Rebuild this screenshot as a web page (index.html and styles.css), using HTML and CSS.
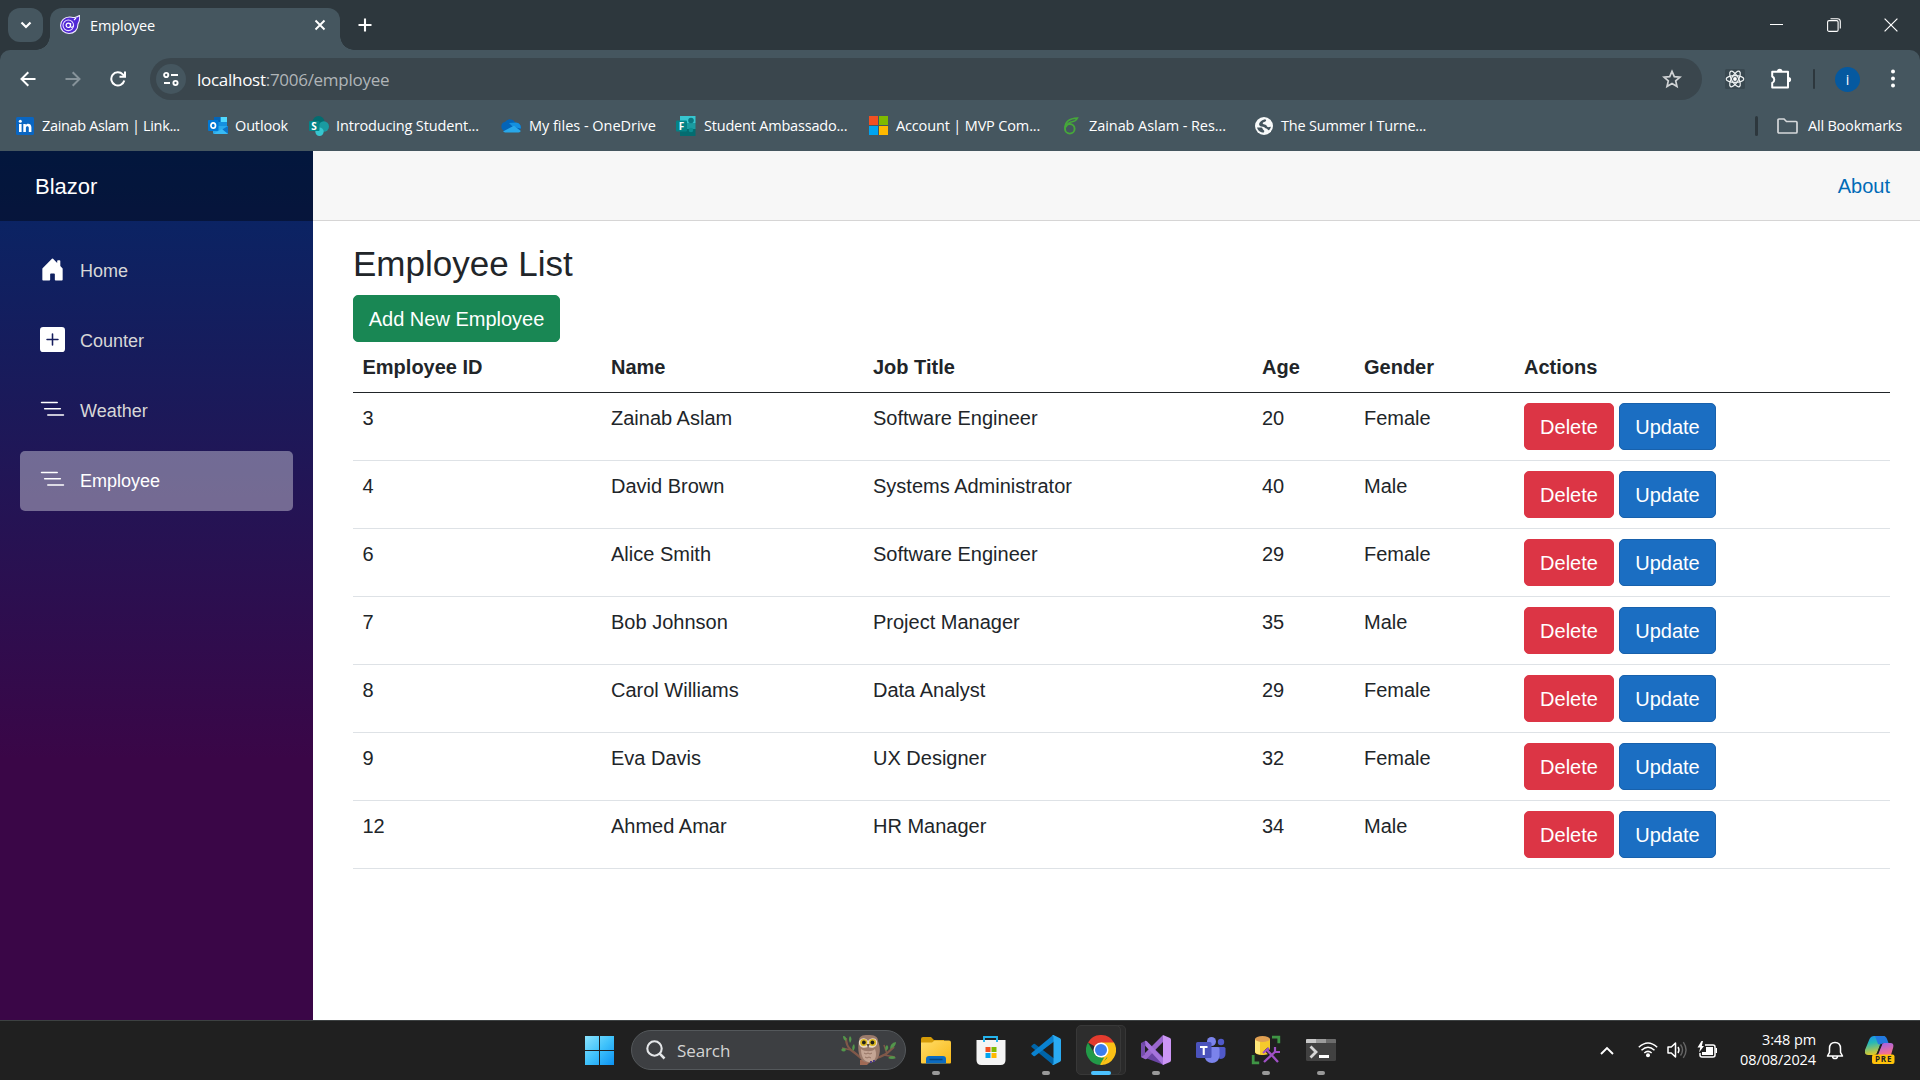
FILE: index.html
```html
<!DOCTYPE html>
<html lang="en">
<head>
<meta charset="utf-8">
<title>Employee</title>
<link rel="stylesheet" href="styles.css">
</head>
<body>
<div class="screen">
  <header class="browser">
    <div class="tabstrip">
      <div class="tab-search"><svg width="12" height="8" viewBox="0 0 12 8"><path d="M1.500 1.500 6 6l4.500-4.500" fill="none" stroke="#fff" stroke-width="2.200"/></svg></div>
      <div class="tab">
        <svg class="favicon" width="20" height="20" viewBox="0 0 20 20"><path d="M19.500.5c.8 4-.2 6-1.500 8.500C18 15 14 18.500 9 18.500 4 18.500.6 15 .6 10.500.6 5.500 4.500 2 9.500 2c2 0 4 1 6 .3C17 2 18 1.500 19.500.5Z" fill="#5027d5" stroke="#f1eaff" stroke-width="1.100"/><circle cx="8.300" cy="10.300" r="5.300" fill="none" stroke="#e7ddff" stroke-width="1.100"/><circle cx="8.300" cy="10.300" r="2.200" fill="none" stroke="#fff" stroke-width="1.200"/><path d="M10.600 8v3.300c0 1.500 2.500 1.500 2.800-.8M14 5l2-2" fill="none" stroke="#fff" stroke-width="1.100"/></svg>
        <span class="tab-title">Employee</span>
        <svg class="tab-close" width="12" height="12" viewBox="0 0 12 12"><path d="m1.500 1.500 9 9m0-9-9 9" stroke="#fff" stroke-width="1.900"/></svg>
      </div>
      <svg class="new-tab" width="14" height="14" viewBox="0 0 14 14"><path d="M7 .5v13M.5 7h13" stroke="#fff" stroke-width="2.100"/></svg>
      <div class="window-controls">
        <svg width="14" height="14" viewBox="0 0 14 14"><path d="M0 6.500h13" stroke="#fff"/></svg>
        <svg width="14" height="14" viewBox="0 0 14 14"><rect x=".6" y="2.600" width="10.500" height="10.800" rx="1.500" fill="none" stroke="#fff" stroke-width="1.100"/><path d="M3.500.7h7a2.800 2.800 0 0 1 2.800 2.800v7" fill="none" stroke="#fff" stroke-width="1.100"/></svg>
        <svg width="14" height="14" viewBox="0 0 14 14"><path d="m.6.6 12.800 12.800m0-12.800L.6 13.400" stroke="#fff" stroke-width="1.200"/></svg>
      </div>
    </div>
    <div class="chrome-body">
      <div class="toolbar">
        <div class="nav-buttons">
          <svg width="16" height="16" viewBox="0 0 16 16"><path d="M15.500 8H2M8.300 1.200 1.500 8l6.800 6.800" fill="none" stroke="#fff" stroke-width="2"/></svg>
          <svg width="16" height="16" viewBox="0 0 16 16"><path d="M.5 8H14M7.700 1.200 14.500 8l-6.800 6.800" fill="none" stroke="#87939a" stroke-width="2"/></svg>
          <svg width="16" height="16" viewBox="0 0 16 16"><path d="M14.300 9.500A6.600 6.600 0 1 1 12.800 3.400L14.500 5.200M15 .5v5.300H9.500" fill="none" stroke="#fff" stroke-width="2"/></svg>
        </div>
        <div class="omnibox">
          <div class="site-info"><svg width="16" height="16" viewBox="0 0 16 16"><g fill="none" stroke="#fff" stroke-width="1.900"><circle cx="3.200" cy="4" r="2.100"/><path d="M8 4h7M1 12h6"/><circle cx="12.500" cy="12" r="2.100"/></g></svg></div>
          <span class="url">localhost<span class="url-rest">:7006/employee</span></span>
          <svg class="star" width="20" height="20" viewBox="0 0 20 20"><path d="m10 2.300 2.300 5.300 5.700.5-4.300 3.800 1.300 5.700-5-3-5 3 1.300-5.700L2 8.100l5.700-.5Z" fill="none" stroke="#d0d3d5" stroke-width="1.700"/></svg>
        </div>
        <svg class="react" width="20" height="20" viewBox="0 0 20 20"><rect width="20" height="20" rx="1.500" fill="#394850"/><g fill="none" stroke="#eef2f3" stroke-width="1.200"><ellipse cx="10" cy="10" rx="8.800" ry="3.400"/><ellipse cx="10" cy="10" rx="8.800" ry="3.400" transform="rotate(60 10 10)"/><ellipse cx="10" cy="10" rx="8.800" ry="3.400" transform="rotate(120 10 10)"/></g><circle cx="10" cy="10" r="1.900" fill="#fff"/></svg>
        <svg class="puzzle" width="22" height="22" viewBox="0 0 22 22"><path d="M2.200 3.700H18v15.800H2.200v-4.600a3.500 3.500 0 0 0 0-6.400Z" fill="none" stroke="#fff" stroke-width="2" stroke-linejoin="round"/><path d="M7 3.500a2.700 2.700 0 0 1 5.400 0ZM18.500 9a2.600 2.600 0 0 1 0 5.200Z" fill="#fff"/></svg>
        <span class="divider thin"></span>
        <span class="avatar">i</span>
        <svg class="menu" width="6" height="20" viewBox="0 0 6 20"><g fill="#fff"><circle cx="3" cy="2.500" r="2"/><circle cx="3" cy="9.500" r="2"/><circle cx="3" cy="16.500" r="2"/></g></svg>
      </div>
      <div class="bookmarks">
        <div class="bookmark b1"><svg width="18" height="18" viewBox="0 0 18 18"><rect width="18" height="18" rx="1.500" fill="#0a66c2"/><path d="M3 7h2.600v8H3zM7.300 7h2.500v1.200c1.300-2.300 5.600-1.700 5.600 2.100V15h-2.600v-4.200c0-2.200-2.900-2-2.900 0V15H7.300z" fill="#fff"/><circle cx="4.300" cy="4.200" r="1.500" fill="#fff"/></svg><span>Zainab Aslam | Link...</span></div>
        <div class="bookmark b2"><svg width="20" height="20" viewBox="0 0 20 20"><path d="M6 1h13v11H6z" fill="#1490df"/><path d="M12.500 1H19v5h-6.500z" fill="#50d9ff"/><path d="M6 1h6.500v5H6z" fill="#0364b8"/><path d="M5 10h15v7.500H5z" fill="#28a8ea"/><path d="m20 10-7.500 4.500 7.500 3Z" fill="#0a74ca"/><path d="m5 18 9-5 6 5Z" fill="#38baf5"/><rect y="4" width="10.500" height="11" rx="1" fill="#0078d4"/><ellipse cx="5.200" cy="9.500" rx="2.300" ry="2.700" fill="none" stroke="#fff" stroke-width="1.700"/></svg><span>Outlook</span></div>
        <div class="bookmark b3"><svg width="20" height="20" viewBox="0 0 20 20"><circle cx="9.500" cy="6" r="6" fill="#036c70"/><circle cx="14.800" cy="10.500" r="5.200" fill="#1a9ba1"/><circle cx="10.500" cy="15.800" r="4.200" fill="#37c6d0"/><rect y="5" width="10.500" height="10" rx="1" fill="#038387"/><text x="2.300" y="13.500" class="glyph">S</text></svg><span>Introducing Student...</span></div>
        <div class="bookmark b4"><svg width="20" height="20" viewBox="0 0 20 20"><path d="M4 15a4.600 4.600 0 0 1 0-9 6 6 0 0 1 10.500 1A4.600 4.600 0 0 1 19.700 13L16 16H4Z" fill="#0364b8"/><path d="m8 7 7-.5c3 .2 5 2.500 4.800 6L12 11Z" fill="#1490df"/><path d="M2 15.500 13 9.700l5.500 4.200c2.500 1 .5 3-1.500 2.600H4Z" fill="#28a8ea"/></svg><span>My files - OneDrive</span></div>
        <div class="bookmark b5"><svg width="20" height="20" viewBox="0 0 20 20"><path d="M4 0h15.500v7H4z" fill="#37c6d0"/><path d="M4 7h15.500v6H4z" fill="#1a9ba1"/><path d="M4 13h15.500v7H4z" fill="#036c70"/><circle cx="15" cy="4.500" r="2.800" fill="#0b7780"/><circle cx="15" cy="14" r="2.300" fill="#0c8d92"/><rect y="4.500" width="11" height="11" rx="1" fill="#038387"/><text x="2.700" y="13.800" class="glyph">F</text></svg><span>Student Ambassado...</span></div>
        <div class="bookmark b6"><svg width="20" height="20" viewBox="0 0 20 20"><path d="M0 0h9v9H0z" fill="#f25022"/><path d="M10 0h9v9h-9z" fill="#7fba00"/><path d="M0 10h9v9H0z" fill="#00a4ef"/><path d="M10 10h9v9h-9z" fill="#ffb900"/></svg><span>Account | MVP Com...</span></div>
        <div class="bookmark b7"><svg width="18" height="20" viewBox="0 0 18 20"><ellipse cx="6.800" cy="12.800" rx="4.800" ry="4.800" fill="none" stroke="#46a83a" stroke-width="1.900"/><path d="M2 12C2 6 5 2.500 14.500 2c-1 2-2 3.200-4.500 3.500C6 6 4 8 3 11" fill="none" stroke="#46a83a" stroke-width="1.600"/></svg><span>Zainab Aslam - Res...</span></div>
        <div class="bookmark b8"><svg width="18" height="18" viewBox="0 0 18 18"><circle cx="9" cy="9" r="9" fill="#f8fafa"/><path d="M10 2.200c1.500.3 1.500 1.600.3 2.400-1.200.8-2.800.6-2.600 2 .2 1 1.700.8 2.800 1.200 1.500.5 1 2 2.500 2.300 1.200.2 2.200-.7 2.900-.2-.3 1.300-1 2.500-1.900 3.400-1.100.2-1.300-1.200-2.600-1.700-1.500-.5-2-1.600-3.500-1.900-2.200-.4-3.200-.5-3.700-2C3.800 6 6 3 10 2.200ZM2 10.500h4.500c1.500.5.800 1.800 2 2.400 1 .5 1 1.600.3 2.600C5.500 15.500 2.700 13.500 2 10.500Z" fill="#45565f"/></svg><span>The Summer I Turne...</span></div>
        <div class="all-bookmarks"><span class="divider"></span><svg width="21" height="16" viewBox="0 0 21 16"><path d="M1 3V2q0-1 1-1h5l2.500 2.500H19q1 0 1 1V14q0 1-1 1H2q-1 0-1-1Z" fill="none" stroke="#d5d8da" stroke-width="1.700"/></svg><span>All Bookmarks</span></div>
      </div>
    </div>
  </header>

  <div class="page">
    <aside class="sidebar">
      <div class="brand">Blazor</div>
      <nav class="nav">
        <a class="nav-link"><svg width="25" height="25" viewBox="0 0 16 16"><path fill="#fff" d="M6.500 14.500v-3.505c0-.245.25-.495.5-.495h2c.25 0 .5.25.5.500v3.500a.5.5 0 0 0 .5.500h4a.5.5 0 0 0 .5-.5v-7a.5.5 0 0 0-.146-.354L13 5.793V2.500a.5.5 0 0 0-.5-.5h-1a.5.5 0 0 0-.5.500v1.293L8.354 1.146a.5.5 0 0 0-.708 0l-6 6A.5.5 0 0 0 1.500 7.500v7a.5.5 0 0 0 .5.500h4a.5.5 0 0 0 .5-.5Z"/></svg>Home</a>
        <a class="nav-link"><svg width="25" height="25" viewBox="0 0 16 16"><path fill="#fff" d="M2 0a2 2 0 0 0-2 2v12a2 2 0 0 0 2 2h12a2 2 0 0 0 2-2V2a2 2 0 0 0-2-2H2zm6.500 4.500v3h3a.5.5 0 0 1 0 1h-3v3a.5.5 0 0 1-1 0v-3h-3a.5.5 0 0 1 0-1h3v-3a.5.5 0 0 1 1 0z"/></svg>Counter</a>
        <a class="nav-link"><svg width="25" height="25" viewBox="0 0 16 16"><path fill="#fff" d="M4.500 11.500A.5.5 0 0 1 5 11h10a.5.5 0 0 1 0 1H5a.5.5 0 0 1-.5-.5zm-2-4A.5.5 0 0 1 3 7h10a.5.5 0 0 1 0 1H3a.5.5 0 0 1-.5-.5zm-2-4A.5.5 0 0 1 1 3h10a.5.5 0 0 1 0 1H1a.5.5 0 0 1-.5-.5z"/></svg>Weather</a>
        <a class="nav-link active"><svg width="25" height="25" viewBox="0 0 16 16"><path fill="#fff" d="M4.500 11.500A.5.5 0 0 1 5 11h10a.5.5 0 0 1 0 1H5a.5.5 0 0 1-.5-.5zm-2-4A.5.5 0 0 1 3 7h10a.5.5 0 0 1 0 1H3a.5.5 0 0 1-.5-.5zm-2-4A.5.5 0 0 1 1 3h10a.5.5 0 0 1 0 1H1a.5.5 0 0 1-.5-.5z"/></svg>Employee</a>
      </nav>
    </aside>
    <main class="main">
      <div class="top-row"><a class="about">About</a></div>
      <article class="content">
        <h3 class="heading">Employee List</h3>
        <button class="btn btn-success">Add New Employee</button>
        <table class="table">
          <colgroup><col class="c-id"><col class="c-name"><col class="c-job"><col class="c-age"><col class="c-gender"><col></colgroup>
          <thead><tr><th>Employee ID</th><th>Name</th><th>Job Title</th><th>Age</th><th>Gender</th><th>Actions</th></tr></thead>
          <tbody>
            <tr><td>3</td><td>Zainab Aslam</td><td>Software Engineer</td><td>20</td><td>Female</td><td><div class="actions"><button class="btn btn-danger">Delete</button><button class="btn btn-primary">Update</button></div></td></tr>
            <tr><td>4</td><td>David Brown</td><td>Systems Administrator</td><td>40</td><td>Male</td><td><div class="actions"><button class="btn btn-danger">Delete</button><button class="btn btn-primary">Update</button></div></td></tr>
            <tr><td>6</td><td>Alice Smith</td><td>Software Engineer</td><td>29</td><td>Female</td><td><div class="actions"><button class="btn btn-danger">Delete</button><button class="btn btn-primary">Update</button></div></td></tr>
            <tr><td>7</td><td>Bob Johnson</td><td>Project Manager</td><td>35</td><td>Male</td><td><div class="actions"><button class="btn btn-danger">Delete</button><button class="btn btn-primary">Update</button></div></td></tr>
            <tr><td>8</td><td>Carol Williams</td><td>Data Analyst</td><td>29</td><td>Female</td><td><div class="actions"><button class="btn btn-danger">Delete</button><button class="btn btn-primary">Update</button></div></td></tr>
            <tr><td>9</td><td>Eva Davis</td><td>UX Designer</td><td>32</td><td>Female</td><td><div class="actions"><button class="btn btn-danger">Delete</button><button class="btn btn-primary">Update</button></div></td></tr>
            <tr><td>12</td><td>Ahmed Amar</td><td>HR Manager</td><td>34</td><td>Male</td><td><div class="actions"><button class="btn btn-danger">Delete</button><button class="btn btn-primary">Update</button></div></td></tr>
          </tbody>
        </table>
      </article>
    </main>
  </div>

  <footer class="taskbar">
    <svg class="start" width="29" height="29" viewBox="0 0 29 29"><defs><linearGradient id="win" x1="0" y1="0" x2="29" y2="29" gradientUnits="userSpaceOnUse"><stop stop-color="#8be3fd"/><stop offset=".5" stop-color="#3fc2fb"/><stop offset="1" stop-color="#0c92f2"/></linearGradient></defs><path d="M0 0h14v14H0zM15 0h14v14H15zM0 15h14v14H0zM15 15h14v14H15z" fill="url(#win)"/></svg>
    <div class="search">
      <svg width="20" height="20" viewBox="0 0 20 20"><circle cx="8.500" cy="8.500" r="7.200" fill="none" stroke="#e4e6e8" stroke-width="2.100"/><path d="m13.700 13.700 4.800 4.800" stroke="#e4e6e8" stroke-width="2.500"/></svg>
      <span>Search</span>
      <svg class="owl" width="56" height="32" viewBox="0 0 56 32">
        <path d="M5 4q0 8 5 12 8 6 12 10l10-1q8-2 13-5l8-7" fill="none" stroke="#805849" stroke-width="2.200"/>
        <path d="m1 14 9 2M46 20l-3-9M43 21l11 2" stroke="#805849" stroke-width="1.500"/>
        <path d="M19 26h12l-5 5h-7Z" fill="#a06a55"/>
        <path d="M18 7c0-5 3-6 9-6s10 1 10 6c2 5 3 11 0 17-3 5-8 5-13 4-6-2-8-12-6-21Z" fill="#9a7a6b"/>
        <path d="M20 15c4 3 11 3 14 0 2 5 1 11-3 13-7 1-11-4-11-13Z" fill="#c4a594"/>
        <path d="M18 7c3-4 7-3 9 0 2-3 7-4 9 0 1 6-4 8-9 6-5 2-10 0-9-6Z" fill="#ead9c4"/>
        <circle cx="22.700" cy="8.500" r="3.500" fill="#d9b61c"/><circle cx="31.600" cy="8.500" r="3.500" fill="#d9b61c"/><circle cx="22.900" cy="8.500" r="1.900" fill="#20201c"/><circle cx="31.400" cy="8.500" r="1.900" fill="#20201c"/>
        <path d="m25.500 10 1.600 4 1.700-4Z" fill="#61514a"/><path d="m23 19 2 1 2-1 2 1 2-1m-7 4 2 1 2-1 2 1" fill="none" stroke="#967464"/>
        <path d="M29 27h2v2h-2zM32 26h2v2h-2z" fill="#4f3d82"/>
        <path d="M2 2q4 0 3 5-3-1-3-5ZM9 9q-2-4 0-7 3 3 0 7ZM0 16q3-4 5 0-2 3-5 0ZM12 17q-2-4 1-7 2 4-1 7ZM45 17q-2-4 1-6 3 3-1 6ZM49 15q0-6 6-7 0 5-6 7ZM47 24q4-4 8 0-4 2-8 0Z" fill="#53964b"/>
      </svg>
    </div>
    <div class="apps">
      <div class="app run"><svg width="30" height="30" viewBox="0 0 30 30"><path d="M0 4q0-2 2-2h8l3 3h10v9H0Z" fill="#d59b08"/><path d="M0 7.500 11 7.500 13.500 5.500H28q2 0 2 2v20q0 1-1 1H1q-1 0-1-1Z" fill="url(#fold)"/><path d="M5 28.500v-4.500q0-3 3-3h14q3 0 3 3v4.500Z" fill="#0c6bc0"/><path d="M8.500 24.500h13" stroke="#064780" stroke-width="1.500"/><defs><linearGradient id="fold" x2="1" y2="1"><stop stop-color="#ffdc68"/><stop offset="1" stop-color="#f9b816"/></linearGradient></defs></svg></div>
      <div class="app"><svg width="30" height="30" viewBox="0 0 30 30"><path d="M8 7V2h13v5" fill="none" stroke="#25b5ee" stroke-width="1.900"/><path d="M.5 5h29v20q0 5-5 5h-19q-5 0-5-5Z" fill="#f4f4f4"/><path d="M9.500 12h5v5h-5z" fill="#f25022"/><path d="M15.500 12h5v5h-5z" fill="#7fba00"/><path d="M9.500 18h5v5h-5z" fill="#00a4ef"/><path d="M15.500 18h5v5h-5z" fill="#ffb900"/><path d="M8 5v2m13-2v2" stroke="#25b5ee" stroke-width="1.900"/></svg></div>
      <div class="app run"><svg width="30" height="30" viewBox="0 0 30 30"><path d="m.5 10.800 2-1.800q.8-.5 1.500 0L23 23.500V30q-1 0-1.700-.7L.5 12Q0 11.300.5 10.800Z" fill="#0065a9"/><path d="m.5 19.200 2 1.800q.8.500 1.500 0L23 6.500V0q-1 0-1.700.7L.5 18q-.5.700 0 1.200Z" fill="#0a82d0"/><path d="m22.500 0 6.500 3.300q1 .5 1 1.700v20q0 1.200-1 1.700L22.500 30q-1 .2-1.700-.5 1.700.5 1.700-1.500V2q0-2-1.700-1.500Q21.500-.2 22.500 0Z" fill="#2aaaf2"/></svg></div>
      <div class="app active"><svg width="30" height="30" viewBox="0 0 30 30"><path d="M15 15 2 7.500A15 15 0 0 1 28 7.500Z" fill="#e33b2e"/><path d="M15 15V7.500h13A15 15 0 0 1 15 30Z" fill="#fbc116"/><path d="M2 7.500 8.500 18.700 15 22.500h6.500L15 30A15 15 0 0 1 2 7.500Z" fill="#229a48"/><path d="M21.500 18.700 15 30" stroke="#fbc116" stroke-width="2"/><circle cx="15" cy="15" r="7.500" fill="#fff"/><circle cx="15" cy="15" r="6" fill="#3b7ded"/></svg></div>
      <div class="app run"><svg width="30" height="30" viewBox="0 0 30 30"><path d="m0 8 4-2q1-.5 2 .5L23 23v7L6 23.500q-1 1-2 .5l-4-2Z" fill="#6b45a5"/><path d="M4 10.500v9L8.500 15Z" fill="#202020"/><path d="m0 22 4 2q1 .5 2-.5L22 7V0L2 20Z" fill="#9967cd"/><path d="M4 6q1-.5 2 .5L22 23v7L4.500 11Z" fill="#a674dc"/><path d="M0 8v14l4-2.500v-9Z" fill="#764eae"/><path d="m22 0 7 3q1 .5 1 2v20q0 1.500-1 2l-7 3Z" fill="#cc96f5"/><path d="M22 10v10l-6-5Z" fill="#202020"/></svg></div>
      <div class="app"><svg width="30" height="30" viewBox="0 0 30 30"><circle cx="25" cy="7" r="3.200" fill="#5059c9"/><circle cx="15.500" cy="6.500" r="4.500" fill="#7b83eb"/><path d="M20 12h8q1.500 0 1.500 1.500V19q0 5-6 5Z" fill="#5059c9"/><path d="M10 12h11.500q2 0 2 2v7q-1 7-7.500 7t-7.500-7v-7q0-2 1.500-2Z" fill="#7b83eb"/><rect y="7" width="15.500" height="16" rx="1.500" fill="#4b53bc"/><path d="M4 11h7.500v2H8.800v7H6.700v-7H4z" fill="#fff"/></svg></div>
      <div class="app run"><svg width="30" height="30" viewBox="0 0 30 30"><path d="M21 2.200h6.800v6M2.200 20v7.800h6" fill="none" stroke="#3f9545" stroke-width="2.800"/><path d="M4 4v13c0 4 15 4 15 0V4Z" fill="#f5ca2c"/><path d="M4 4v13q1 2 5 2.600V4Z" fill="#ffe779"/><ellipse cx="11.500" cy="4" rx="7.500" ry="3" fill="#e0a052"/><path d="m12 28 14-13m-11-1 12 13" stroke="#202020" stroke-width="4.500"/><path d="m13 27 12-11m-9-1 11 12" stroke="#9f50c6" stroke-width="2.300"/><path d="m12 18 6-5M24 12v5h5" fill="none" stroke="#9f50c6" stroke-width="2.200"/></svg></div>
      <div class="app run"><svg width="30" height="30" viewBox="0 0 30 30"><rect y="4" width="30" height="22" rx="1.500" fill="#414141"/><path d="M1 4h9v4H0V5q0-1 1-1Z" fill="#c8c8c8"/><path d="M10 4h10v4H10z" fill="#9b9b9b"/><path d="M20 4h9q1 0 1 1v3H20z" fill="#6c6c6c"/><path d="m4.500 11.500 5.500 5.500-5.500 5.500" fill="none" stroke="#d6d6d6" stroke-width="2.800"/><path d="M13 20h10v3H13z" fill="#fff"/></svg></div>
    </div>
    <div class="tray">
      <svg class="up" width="14" height="9" viewBox="0 0 14 9"><path d="m1 8 6-6 6 6" fill="none" stroke="#fff" stroke-width="1.900"/></svg>
      <svg class="wifi" width="20" height="16" viewBox="0 0 20 16"><g fill="none" stroke="#fff" stroke-width="1.500"><path d="M.8 5.300q9.200-8.600 18.400 0M3.500 8.200q6.500-6 13 0M6.300 11q3.700-3.300 7.400 0"/></g><circle cx="10" cy="13.300" r="2" fill="#fff"/></svg>
      <svg class="sound" width="20" height="18" viewBox="0 0 20 18"><path d="M1 6h3.300L8.500 2v14l-4.200-4H1Z" fill="none" stroke="#fff" stroke-width="1.500" stroke-linejoin="round"/><path d="M11 6q2 3 0 6" fill="none" stroke="#fff" stroke-width="1.400"/><path d="M13.500 3.500q4 5.500 0 11M16.300 1.200q5.500 8 0 15.600" fill="none" stroke="#666" stroke-width="1.400"/></svg>
      <svg class="battery" width="21" height="18" viewBox="0 0 21 18"><path d="M8 4h8q2 0 2 2v8q0 2-2 2H5q-2 0-2-2v-2" fill="none" stroke="#fff" stroke-width="1.500"/><path d="M9 6h7v8H5v-3h4ZM18.500 7H20v5h-1.500z" fill="#fff"/><path d="m4.500 0-4 6.500h2.800L2 11.500l5-6.500H4.800L6 0Z" fill="#fff"/></svg>
      <div class="clock"><span>3:48 pm</span><span>08/08/2024</span></div>
      <svg class="bell" width="18" height="19" viewBox="0 0 18 19"><path d="M9 1.500c-3.500 0-5.500 2.500-5.500 6v3.800L1.500 15h15l-2-3.700V7.500c0-3.500-2-6-5.500-6ZM6.500 15q0 2.600 2.500 2.600t2.500-2.600" fill="none" stroke="#fff" stroke-width="1.500" stroke-linejoin="round"/></svg>
      <svg class="copilot" width="30" height="30" viewBox="0 0 30 30"><defs><linearGradient id="cp1" x2=".2" y2="1"><stop stop-color="#178ff0"/><stop offset=".4" stop-color="#24b8b8"/><stop offset="1" stop-color="#dbc92c"/></linearGradient><linearGradient id="cp2" x2=".3" y2="1"><stop stop-color="#9961ee"/><stop offset="1" stop-color="#f8708d"/></linearGradient></defs><path d="M4.500 4Q6 1 9 1h11l-4 6-3.500 10q-1 3-4 3H3q-4 0-3-5Z" fill="url(#cp1)"/><path d="M10 1h8q3 0 4 3l1.500 4H19q-2 0-3 2l-3-1Z" fill="#2379df"/><path d="M19 8h6.500q3.500 0 2.800 4L26 20H12.500l4-10q.8-2 2.500-2Z" fill="url(#cp2)"/><path d="M16.500 9 12 20" stroke="#202020" stroke-width="1.700"/><rect x="7" y="19.500" width="22.500" height="9.500" rx="2" fill="#ffc20a"/><text x="10" y="27.200" class="pre">PRE</text></svg>
    </div>
  </footer>
</div>
</body>
</html>
```
FILE: styles.css
```css
* { box-sizing: border-box; }
body { margin: 0; font-family: "Liberation Sans", Arial, sans-serif; overflow: hidden; }
svg { display: block; flex: none; }
.screen { width: 1920px; height: 1080px; display: flex; flex-direction: column; }

/* Browser frame */
.browser { height: 151px; background: #2d373d; color: #fff; font-family: "Open Sans", sans-serif; }
.tabstrip { height: 50px; display: flex; padding: 8px 0 0 8px; }
.tab-search { width: 35px; height: 34px; border-radius: 12px; background: #45565f; display: flex; align-items: center; justify-content: center; }
.tab { position: relative; width: 290px; height: 42px; margin-left: 7px; border-radius: 12px 12px 0 0; background: #45565f; display: flex; align-items: center; padding: 0 14px 8px 10px; }
.tab::before, .tab::after { content: ""; position: absolute; bottom: 0; width: 14px; height: 14px; }
.tab::before { left: -14px; background: radial-gradient(circle at 0 0, transparent 13.5px, #45565f 14px); }
.tab::after { right: -14px; background: radial-gradient(circle at 100% 0, transparent 13.5px, #45565f 14px); }
.tab-title { margin-left: 10px; font-size: 14.5px; letter-spacing: -0.15px; flex: 1; }
.new-tab { margin: 10px 0 0 18px; }
.window-controls { margin: 10px 22px 0 auto; display: flex; gap: 43px; }
.chrome-body { height: 101px; background: #45565f; border-radius: 10px 10px 0 0; }
.toolbar { height: 58px; padding: 0 24px 0 20px; display: flex; align-items: center; }
.nav-buttons { display: flex; gap: 29px; width: 130px; }
.omnibox { width: 1552px; height: 42px; border-radius: 21px; background: #3a464d; display: flex; align-items: center; padding: 0 20px 0 6px; }
.site-info { width: 30px; height: 30px; border-radius: 50%; background: #45565f; display: flex; align-items: center; justify-content: center; }
.url { flex: 1; margin-left: 11px; font-size: 17px; letter-spacing: -0.28px; }
.url-rest { color: #b0b5b8; }
.react { margin-left: 23px; }
.puzzle { margin-left: 25px; }
.divider { width: 3px; height: 20px; border-radius: 2px; background: #2d373d; }
.thin { width: 2px; margin-left: 21px; }
.avatar { width: 25px; height: 25px; margin-left: 20px; border-radius: 50%; background: #0559a0; text-align: center; font-size: 14px; line-height: 25px; }
.menu { margin-left: auto; }
.bookmarks { height: 43px; display: flex; align-items: center; padding: 0 18px 7px 16px; font-size: 14.5px; white-space: nowrap; }
.bookmarks span:last-child { padding-bottom: 2px; }
.bookmark { display: flex; align-items: center; gap: 8px; }
.b1 { width: 192px; letter-spacing: -0.35px; }
.b2 { width: 101px; gap: 7px; letter-spacing: -0.15px; }
.b3 { width: 192px; gap: 7px; letter-spacing: -0.15px; }
.b4 { width: 175px; letter-spacing: -0.02px; }
.b5 { width: 193px; letter-spacing: -0.2px; }
.b6 { width: 194px; gap: 7px; letter-spacing: -0.15px; }
.b7 { width: 192px; letter-spacing: -0.07px; }
.b8 { width: 200px; letter-spacing: -0.2px; }
.glyph { font: bold 10px "Open Sans", sans-serif; fill: #fff; }
.all-bookmarks { margin-left: auto; display: flex; align-items: center; letter-spacing: -0.2px; gap: 10px; }
.all-bookmarks svg { margin-left: 9px; }

/* Web page */
.page { height: 869px; display: flex; background: #fff; color: #212529; font-size: 20px; line-height: 30px; }
.sidebar { width: 313px; background: linear-gradient(180deg, rgb(5, 39, 103) 0%, #3a0647 70%); }
.brand { height: 70px; padding-left: 35px; background: rgba(0, 0, 0, 0.4); color: #fff; font-size: 22px; line-height: 72px; }
.nav { padding: 20px; display: flex; flex-direction: column; gap: 10px; }
.nav-link { height: 60px; padding-left: 20px; border-radius: 5px; display: flex; align-items: center; gap: 15px; color: #d7d7d7; font-size: 18px; }
.nav-link svg { margin-top: -3px; }
.active.nav-link { background: rgba(255, 255, 255, 0.37); color: #fff; }
.main { flex: 1; }
.top-row { height: 70px; padding-right: 30px; background: #f7f7f7; border-bottom: 1px solid #d6d5d5; display: flex; align-items: center; justify-content: flex-end; }
.about { color: #006bb7; }
.content { padding: 22px 30px 0 40px; }
.heading { margin: 0 0 10px; font-size: 35px; line-height: 42px; font-weight: 500; }
.btn { display: block; height: 47px; border: 1px solid; border-radius: 5px; padding: 0 15px; font: 20px/30px "Liberation Sans", Arial, sans-serif; color: #fff; white-space: nowrap; }
.btn-success { width: 207px; padding: 0 14px; background: #198754; border-color: #198754; }
.btn-danger { width: 90px; background: #dc3545; border-color: #dc3545; }
.btn-primary { width: 97px; background: #1b6ec2; border-color: #1861ac; }
.table { width: 100%; table-layout: fixed; border-collapse: separate; border-spacing: 0; }
.c-id { width: 248px; }
.c-name { width: 262px; }
.c-job { width: 389px; }
.c-age { width: 102px; }
.c-gender { width: 160px; }
.table th, .table td { padding: 10px; text-align: left; vertical-align: top; border-bottom: 1px solid #dee2e6; }
.table th { height: 51px; border-color: #212529; }
.table td { height: 68px; }
.table th:first-child, .table td:first-child { padding-left: 9.5px; }
.actions { display: flex; gap: 5px; }

/* Desktop taskbar */
.taskbar { height: 60px; background: #202020; border-top: 1px solid #3d4142; color: #fff; display: flex; align-items: center; padding: 0 0 1px 585px; font-family: "Open Sans", sans-serif; }
.search { width: 275px; height: 40px; margin-left: 17px; border: 1px solid #54585b; border-radius: 20px; background: #3d3f42; display: flex; align-items: center; padding: 0 8px 0 14px; }
.search span { flex: 1; margin-left: 11px; color: #d4d4d4; font-size: 17px; letter-spacing: -0.1px; }
.apps { display: flex; gap: 5px; margin-left: 5px; }
.app { position: relative; width: 50px; height: 50px; display: flex; align-items: center; justify-content: center; }
.app.active { width: 45px; margin-right: 5px; padding-left: 5px; border: 1px solid #383838; border-radius: 5px; background: #2d2d2d; box-shadow: 5px 0 0 -1px #2a2a2a, 5px 0 0 #363636; }
.run::after, .app.active::after { content: ""; position: absolute; bottom: 0; left: 21px; width: 8px; height: 4px; border-radius: 2px; background: #999; }
.app.active::after { bottom: -1px; left: 14px; width: 20px; background: #4cc2ff; }
.tray { margin-left: auto; padding-right: 25px; display: flex; align-items: center; }
.wifi { margin-left: 24px; }
.sound { margin-left: 9px; }
.battery { margin-left: 10px; }
.clock { width: 98px; padding-bottom: 1px; display: flex; flex-direction: column; align-items: flex-end; font-size: 14.5px; line-height: 20px; letter-spacing: -0.1px; }
.bell { margin-left: 10px; }
.copilot { margin-left: 21px; }
.pre { font: bold 8px "Open Sans", sans-serif; fill: #222; letter-spacing: 0.8px; }
```
